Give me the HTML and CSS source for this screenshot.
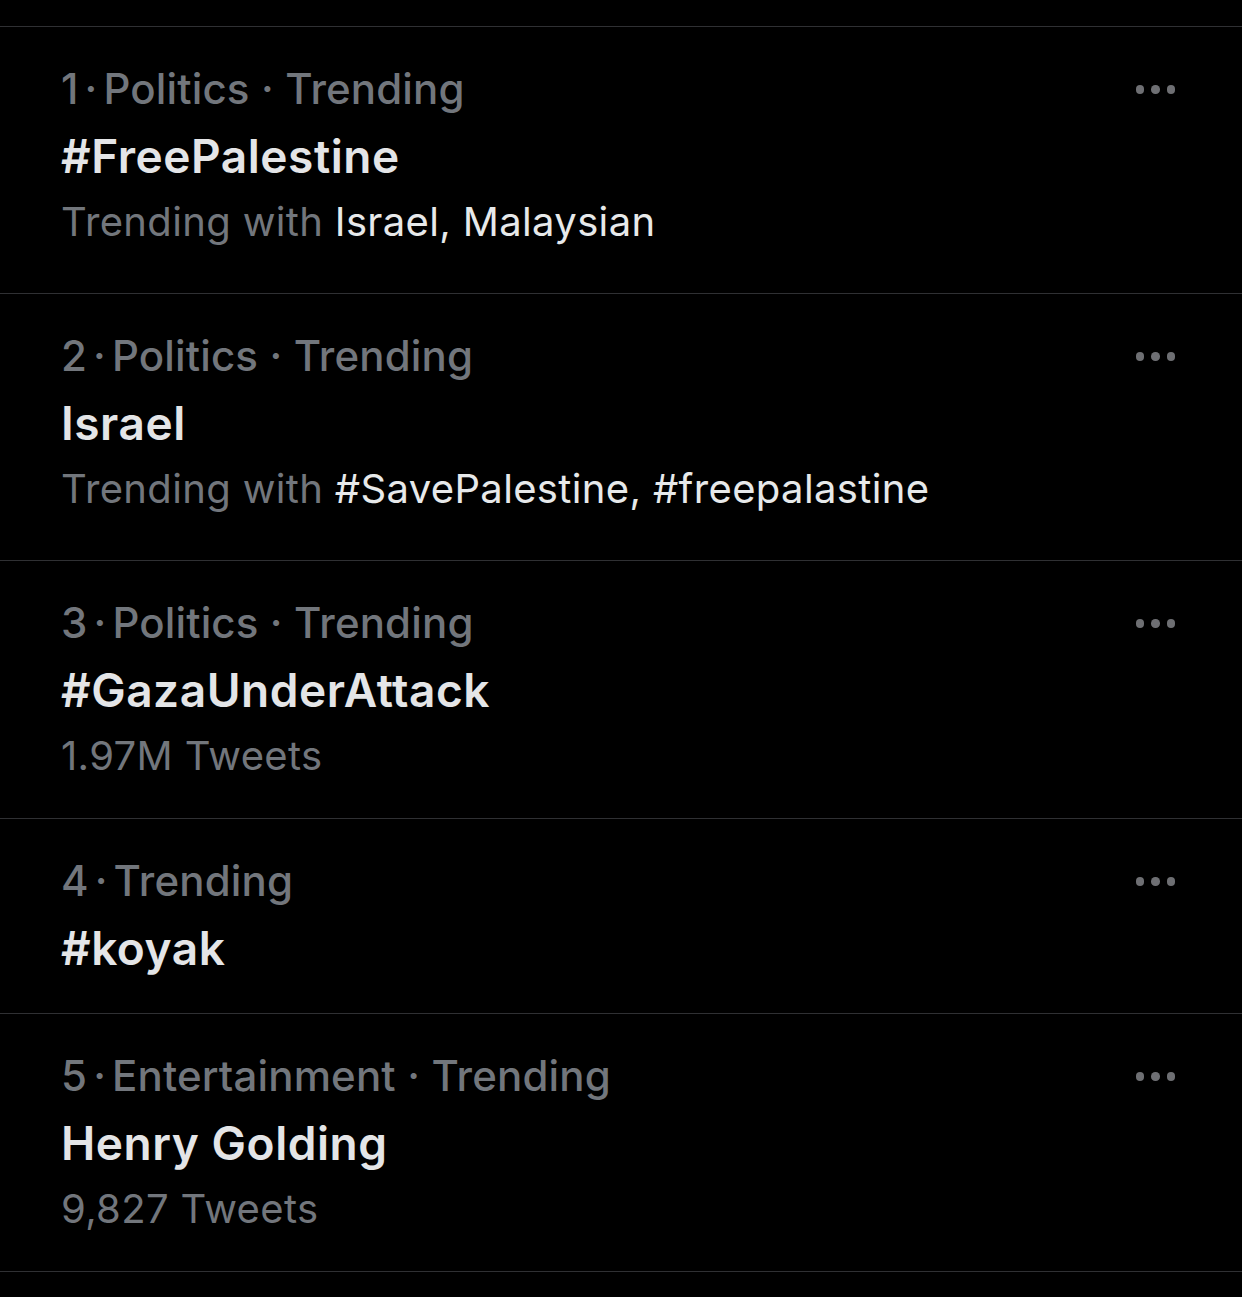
FILE: index.html
```html
<!DOCTYPE html>
<html lang="en">
<head>
<meta charset="utf-8">
<title>Trends</title>
<link rel="stylesheet" href="styles.css">
</head>
<body>
<div class="list">
  <div class="trend with">
    <div class="body">
      <div class="meta">1<span class="sep">·</span>Politics · Trending</div>
      <div class="title">#FreePalestine</div>
      <div class="sub">Trending with <span class="hl">Israel, Malaysian</span></div>
    </div>
    <div class="more"><i></i><i></i><i></i></div>
  </div>
  <div class="trend with">
    <div class="body">
      <div class="meta">2<span class="sep">·</span>Politics · Trending</div>
      <div class="title">Israel</div>
      <div class="sub">Trending with <span class="hl">#SavePalestine, #freepalastine</span></div>
    </div>
    <div class="more"><i></i><i></i><i></i></div>
  </div>
  <div class="trend">
    <div class="body">
      <div class="meta">3<span class="sep">·</span>Politics · Trending</div>
      <div class="title">#GazaUnderAttack</div>
      <div class="sub">1.97M Tweets</div>
    </div>
    <div class="more"><i></i><i></i><i></i></div>
  </div>
  <div class="trend">
    <div class="body">
      <div class="meta">4<span class="sep">·</span>Trending</div>
      <div class="title">#koyak</div>
    </div>
    <div class="more"><i></i><i></i><i></i></div>
  </div>
  <div class="trend">
    <div class="body">
      <div class="meta">5<span class="sep">·</span>Entertainment · Trending</div>
      <div class="title">Henry Golding</div>
      <div class="sub">9,827 Tweets</div>
    </div>
    <div class="more"><i></i><i></i><i></i></div>
  </div>
</div>
</body>
</html>
```
FILE: styles.css
```css
html, body {
  margin: 0;
  padding: 0;
  background: #000;
}
body {
  font-family: Inter, "Noto Sans", "Liberation Sans", sans-serif;
  color: #e7e9ea;
  -webkit-font-smoothing: antialiased;
}
.list {
  margin-top: 26px;
  border-top: 1px solid #2f3033;
}
.trend {
  display: flex;
  align-items: flex-start;
  padding: 36px 67px 24px 61px;
  border-bottom: 1px solid #2f3033;
}
.body {
  flex: 1;
  min-width: 0;
}
.meta {
  font-size: 42px;
  line-height: 52px;
  font-weight: 500;
  color: #72767c;
  letter-spacing: 0.15px;
}
.sep {
  margin: 0 6px;
}
.title {
  font-size: 46px;
  line-height: 82px;
  font-weight: 600;
  color: #e4e5e7;
  letter-spacing: 0.55px;
}
.sub {
  font-size: 40px;
  line-height: 49px;
  font-weight: 400;
  color: #72767c;
  margin-bottom: 14px;
  letter-spacing: 0.35px;
}
.trend.with .sub {
  margin-bottom: 23px;
}
.hl {
  color: #e7e9ea;
}
.more {
  display: flex;
  gap: 7px;
  margin-top: 22px;
}
.more i {
  display: block;
  width: 8.5px;
  height: 8.5px;
  border-radius: 50%;
  background: #6e6f73;
}
```
